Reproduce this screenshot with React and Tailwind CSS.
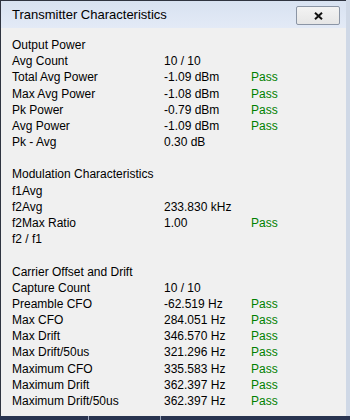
import React from "react";

const sections = [
  {
    title: "Output Power",
    rows: [
      ["Avg Count", "10 / 10", ""],
      ["Total Avg Power", "-1.09 dBm", "Pass"],
      ["Max Avg Power", "-1.08 dBm", "Pass"],
      ["Pk Power", "-0.79 dBm", "Pass"],
      ["Avg Power", "-1.09 dBm", "Pass"],
      ["Pk - Avg", "0.30 dB", ""],
    ],
  },
  {
    title: "Modulation Characteristics",
    rows: [
      ["f1Avg", "", ""],
      ["f2Avg", "233.830 kHz", ""],
      ["f2Max Ratio", "1.00", "Pass"],
      ["f2 / f1", "", ""],
    ],
  },
  {
    title: "Carrier Offset and Drift",
    rows: [
      ["Capture Count", "10 / 10", ""],
      ["Preamble CFO", "-62.519 Hz", "Pass"],
      ["Max CFO", "284.051 Hz", "Pass"],
      ["Max Drift", "346.570 Hz", "Pass"],
      ["Max Drift/50us", "321.296 Hz", "Pass"],
      ["Maximum CFO", "335.583 Hz", "Pass"],
      ["Maximum Drift", "362.397 Hz", "Pass"],
      ["Maximum Drift/50us", "362.397 Hz", "Pass"],
    ],
  },
];

function Row({ label, value, status }) {
  return (
    <div className="flex h-[16.18px] items-center whitespace-nowrap">
      <span className="w-[152px]">{label}</span>
      <span className="w-[87px]">{value}</span>
      <span className="text-[#008000]">{status}</span>
    </div>
  );
}

export default function App() {
  return (
    <div
      className="flex h-[420px] w-[350px] flex-col bg-[#cfd8e6] text-black"
      style={{ fontFamily: '"Liberation Sans", Arial, sans-serif' }}
    >
      <div className="flex flex-1">
        <div className="flex w-[346px] flex-col border-l border-t border-[#2f3440] bg-[#f0f0f0]">
          {/* title bar */}
          <div className="flex h-[27px] items-center justify-between bg-gradient-to-b from-[#d8e2f1] to-[#e3eaf6] pl-[11px] pr-[6px]">
            <span className="text-[13px]">Transmitter Characteristics</span>
            <button className="mt-[2px] flex h-[19px] w-[44px] items-center justify-center rounded-[2px] border border-[#8b95a5] bg-gradient-to-b from-[#f3f3f3] to-[#e6e6e6]">
              <svg width="9" height="8" viewBox="0 0 9 8">
                <path d="M1 0.8 L8 7.2 M8 0.8 L1 7.2" stroke="#111" strokeWidth="2" />
              </svg>
            </button>
          </div>

          <div className="flex flex-col pl-[11px] pt-[9px] text-[12px]">
            {sections.map((s, i) => (
              <div key={i} className="flex flex-col">
                {i > 0 && <div className="h-[16.18px]" />}
                <div className="flex h-[16.18px] items-center">{s.title}</div>
                {s.rows.map((r, j) => (
                  <Row key={j} label={r[0]} value={r[1]} status={r[2]} />
                ))}
              </div>
            ))}
          </div>
        </div>
      </div>
      <div className="flex h-[4px] bg-[#293450]">
        <div className="ml-[88px] w-px bg-[#9aa6bd]" />
        <div className="ml-[71px] w-px bg-[#9aa6bd]" />
      </div>
    </div>
  );
}
